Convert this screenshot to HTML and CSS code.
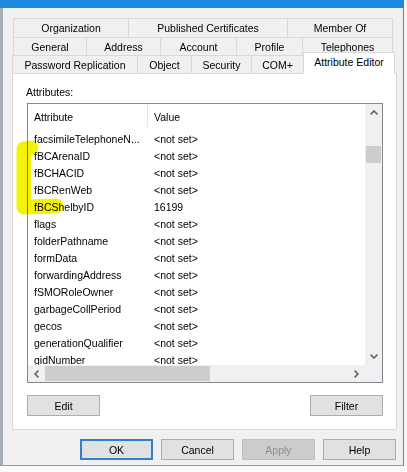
FILE: index.html
```html
<!DOCTYPE html>
<html>
<head>
<meta charset="utf-8">
<link rel="stylesheet" href="styles.css">
</head>
<body>
<div class="screen">
  <div class="main">
    <div class="window">
      <div class="titlebar"></div>
      <div class="frame">
        <div class="lborder"></div>
        <div class="dialog">
          <div class="tabs">
            <div class="tabrow r1">
              <div class="tab w116">Organization</div>
              <div class="tab w160">Published Certificates</div>
              <div class="tab w106">Member Of</div>
            </div>
            <div class="tabrow r2">
              <div class="tab w74">General</div>
              <div class="tab w75">Address</div>
              <div class="tab w77">Account</div>
              <div class="tab w67">Profile</div>
              <div class="tab w91">Telephones</div>
            </div>
            <div class="tabrow r3">
              <div class="tab w126">Password Replication</div>
              <div class="tab w55">Object</div>
              <div class="tab w61">Security</div>
              <div class="tab w53">COM+</div>
              <div class="tab w92 sel">Attribute Editor</div>
            </div>
          </div>
          <div class="panel">
            <div class="label">Attributes:</div>
            <div class="list">
              <div class="viewport">
                <div class="lhead">
                  <div class="c1 hc1">Attribute</div>
                  <div class="hdiv"></div>
                  <div class="c2">Value</div>
                </div>
                <div class="row"><div class="c1">facsimileTelephoneN...</div><div class="c2">&lt;not set&gt;</div></div>
                <div class="row"><div class="c1">fBCArenaID</div><div class="c2">&lt;not set&gt;</div></div>
                <div class="row"><div class="c1">fBCHACID</div><div class="c2">&lt;not set&gt;</div></div>
                <div class="row"><div class="c1">fBCRenWeb</div><div class="c2">&lt;not set&gt;</div></div>
                <div class="row"><div class="c1">fBCShelbyID</div><div class="c2">16199</div></div>
                <div class="row"><div class="c1">flags</div><div class="c2">&lt;not set&gt;</div></div>
                <div class="row"><div class="c1">folderPathname</div><div class="c2">&lt;not set&gt;</div></div>
                <div class="row"><div class="c1">formData</div><div class="c2">&lt;not set&gt;</div></div>
                <div class="row"><div class="c1">forwardingAddress</div><div class="c2">&lt;not set&gt;</div></div>
                <div class="row"><div class="c1">fSMORoleOwner</div><div class="c2">&lt;not set&gt;</div></div>
                <div class="row"><div class="c1">garbageCollPeriod</div><div class="c2">&lt;not set&gt;</div></div>
                <div class="row"><div class="c1">gecos</div><div class="c2">&lt;not set&gt;</div></div>
                <div class="row"><div class="c1">generationQualifier</div><div class="c2">&lt;not set&gt;</div></div>
                <div class="row"><div class="c1">gidNumber</div><div class="c2">&lt;not set&gt;</div></div>
              </div>
              <div class="vscroll">
                <div class="sbtn"><svg width="8" height="5" viewBox="0 0 8 5"><polyline points="0.6,4.4 4,1 7.4,4.4" class="chev"/></svg></div>
                <div class="vtrack"><div class="vthumb"></div></div>
                <div class="sbtn"><svg width="8" height="5" viewBox="0 0 8 5"><polyline points="0.6,0.6 4,4 7.4,0.6" class="chev"/></svg></div>
              </div>
              <div class="hscroll">
                <div class="sbtn sq"><svg width="5" height="8" viewBox="0 0 5 8"><polyline points="4.4,0.6 1,4 4.4,7.4" class="chev"/></svg></div>
                <div class="htrack"><div class="hthumb"></div></div>
                <div class="sbtn sq"><svg width="5" height="8" viewBox="0 0 5 8"><polyline points="0.6,0.6 4,4 0.6,7.4" class="chev"/></svg></div>
              </div>
              <div class="corner"></div>
            </div>
            <div class="btnrow">
              <div class="btn">Edit</div>
              <div class="btn">Filter</div>
            </div>
          </div>
          <div class="footer">
            <div class="btn default">OK</div>
            <div class="btn">Cancel</div>
            <div class="btn disabled">Apply</div>
            <div class="btn">Help</div>
          </div>
        </div>
        <div class="rborder"></div>
      </div>
    </div>
    <div class="outside"></div>
  </div>
  <div class="bottom"></div>
  <svg class="highlight" width="407" height="472" viewBox="0 0 407 472">
    <path d="M31,148 L24,149 L24,207 L56,206" class="marker"/>
  </svg>
</div>
</body>
</html>
```

FILE: styles.css
```css
* { box-sizing: border-box; }
html, body { margin: 0; padding: 0; }
body {
  font-family: "Liberation Sans", Arial, sans-serif;
  font-size: 10.5px;
  color: #000;
  background: #fff;
}
.screen {
  position: relative;
  width: 407px;
  height: 472px;
  overflow: hidden;
  background: #fff;
}
.main { display: flex; height: 466px; }
.window {
  width: 404px;
  display: flex;
  flex-direction: column;
  border-bottom: 1px solid #9a9a9a;
}
.titlebar { height: 8px; flex: none; background: #1e8ae0; }
.frame { flex: 1; display: flex; min-height: 0; }
.lborder { width: 3px; flex: none; background: #a7aeb6; }
.rborder { width: 1px; flex: none; background: #3d8fd8; }
.outside { width: 3px; flex: none; background: #f4f4f4; }
.bottom { height: 6px; background: #fafafa; }

.dialog {
  flex: 1;
  background: #f0f0f0;
  padding-top: 10px;
  display: flex;
  flex-direction: column;
}

.tabrow { display: flex; margin-left: 10px; }
.tabrow.r1 { height: 19px; }
.tabrow.r2 { height: 18px; }
.tabrow.r3 { height: 18px; margin-left: 9px; align-items: flex-end; }
.tab {
  height: 100%;
  border: 1px solid #d9d9d9;
  border-bottom: none;
  margin-right: -1px;
  display: flex;
  align-items: center;
  justify-content: center;
  white-space: nowrap;
  background: #f0f0f0;
}
.tab.sel {
  height: 22px;
  margin-bottom: -1px;
  padding-bottom: 3px;
  background: #fff;
  position: relative;
  z-index: 1;
}
.w53 { width: 53px; } .w55 { width: 55px; } .w61 { width: 61px; }
.w67 { width: 67px; } .w74 { width: 74px; } .w75 { width: 75px; }
.w77 { width: 77px; } .w91 { width: 91px; } .w92 { width: 92px; }
.w106 { width: 106px; } .w116 { width: 116px; } .w126 { width: 126px; }
.w160 { width: 160px; }

.panel {
  margin-left: 9px;
  width: 385px;
  height: 357px;
  flex: none;
  border: 1px solid #d9d9d9;
  background: #fff;
  padding: 12px 13px 0 14px;
  display: flex;
  flex-direction: column;
}
.label { line-height: 13px; margin-left: -1px; }
.list {
  margin-top: 4px;
  height: 280px;
  flex: none;
  border: 1px solid #828790;
  display: grid;
  grid-template-columns: 1fr 17px;
  grid-template-rows: 1fr 17px;
}
.viewport { overflow: hidden; background: #fff; min-height: 0; }
.lhead { display: flex; height: 26px; align-items: center; }
.hdiv { width: 1px; height: 23px; align-self: flex-start; background: #e5e5e5; flex: none; }
.row { display: flex; height: 17px; align-items: center; white-space: nowrap; }
.c1 { width: 120px; flex: none; padding-left: 6px; white-space: nowrap; overflow: hidden; }
.hc1 { width: 119px; }
.c2 { padding-left: 6px; white-space: nowrap; }

.vscroll { background: #f0f0f0; display: flex; flex-direction: column; min-height: 0; }
.sbtn { height: 17px; flex: none; display: flex; align-items: center; justify-content: center; }
.sbtn.sq { width: 17px; }
.vtrack { flex: 1; padding-top: 25px; }
.vthumb { height: 17px; margin: 0 1px; background: #cdcdcd; }
.hscroll { background: #f0f0f0; display: flex; }
.htrack { flex: 1; padding: 1px 0; }
.hthumb { width: 165px; height: 15px; background: #cdcdcd; }
.corner { background: #f0f0f0; }
.chev { fill: none; stroke: #606060; stroke-width: 1.5; }

.btnrow { display: flex; justify-content: space-between; margin-top: 12px; }
.btn {
  width: 73px;
  height: 21px;
  flex: none;
  border: 1px solid #adadad;
  background: #e1e1e1;
  display: flex;
  align-items: center;
  justify-content: center;
}
.btn.default { border: 2px solid #2f7fd2; }
.btn.disabled { background: #cccccc; border-color: #bfbfbf; color: #8f8f8f; }
.footer {
  display: flex;
  justify-content: flex-end;
  gap: 8px;
  padding-right: 7px;
  margin-top: 9px;
}

.highlight {
  position: absolute;
  left: 0;
  top: 0;
  pointer-events: none;
  mix-blend-mode: multiply;
}
.marker {
  fill: none;
  stroke: #f2f20a;
  stroke-width: 15;
  stroke-linecap: round;
  stroke-linejoin: round;
}
```
